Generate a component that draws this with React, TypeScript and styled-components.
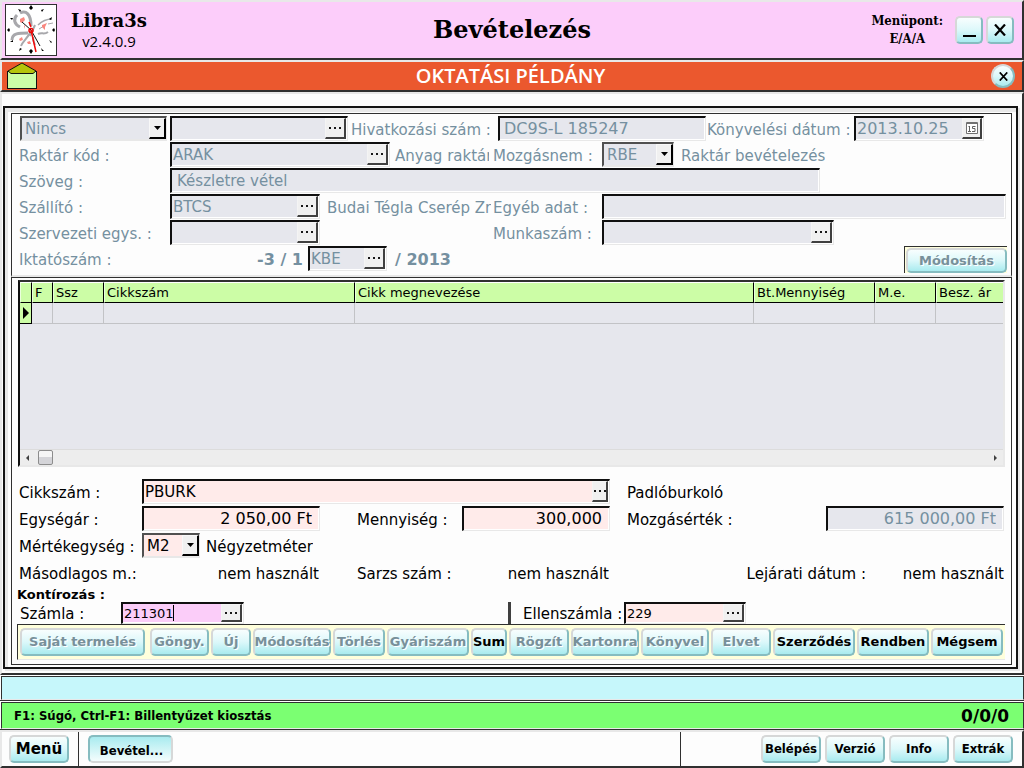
import React from "react";
import styled, { createGlobalStyle, css } from "styled-components";

const ink = "#303030";
const pale = "#e8e8e8";
const muted = "#7590a0";
const sans = '"DejaVu Sans", Verdana, sans-serif';
const narrow = '"DejaVu Sans Condensed", "DejaVu Sans", Tahoma, sans-serif';
const serif = '"DejaVu Serif", Georgia, serif';
const narrowSerif = '"DejaVu Serif Condensed", "DejaVu Serif", Georgia, serif';
const humanist = '"Open Sans", "Trebuchet MS", sans-serif';

const GlobalStyle = createGlobalStyle`
  *, *::before, *::after { box-sizing: border-box; }
  body {
    margin: 0;
    background: #fdfdfd;
    color: #000;
    font-family: ${sans};
    font-size: 15px;
    line-height: 20px;
  }
  button, input, select { font: inherit; color: inherit; margin: 0; }
`;

/* ---------- window frame ---------- */

const Window = styled.div`
  display: flex;
  flex-direction: column;
  min-height: 100vh;
`;

const strip = css`
  border: 2px solid;
  border-color: ${pale} ${ink} ${ink} ${pale};
`;

const Header = styled.header`
  ${strip}
  display: grid;
  grid-template-columns: 1fr auto 1fr;
  align-items: center;
  height: 60px;
  background: #fccdfa;
`;

const Brand = styled.div`
  display: flex;
  align-items: center;
  gap: 14px;
  padding-left: 3px;
`;

const LogoBox = styled.div`
  width: 52px;
  height: 52px;
  background: #fff;
  border: 1px solid ${ink};
  svg { display: block; }
`;

const BrandText = styled.div`
  text-align: center;
`;

const BrandName = styled.div`
  font: bold 18px/22px ${serif};
`;

const Version = styled.div`
  font-family: ${humanist};
  font-size: 15px;
  font-weight: 500;
  line-height: 18px;
`;

const Title = styled.h1`
  margin: 0;
  font: bold 24px/32px ${serif};
`;

const HeaderSide = styled.div`
  display: flex;
  align-items: center;
  justify-content: flex-end;
  gap: 3px;
  padding-right: 8px;
`;

const MenuPoint = styled.div`
  margin-right: 9px;
  text-align: center;
  font: bold 13px/18px ${narrowSerif};
`;

const Banner = styled.div`
  ${strip}
  display: grid;
  grid-template-columns: 1fr auto 1fr;
  align-items: center;
  height: 32px;
  padding: 0 7px 0 4px;
  background: #eb582e;
  color: #fff;
  svg { display: block; }
`;

const BannerText = styled.strong`
  font-family: ${humanist};
  font-weight: 600;
  font-size: 20px;
  line-height: 28px;
`;

/* ---------- buttons ---------- */

const Button = styled.button<{ $w: number; $pressed?: boolean }>`
  flex: none;
  width: ${(p) => p.$w}px;
  height: 28px;
  padding: ${(p) => (p.$pressed ? "4px 0 0 2px" : "0")};
  border: 2px solid;
  border-color: ${(p) =>
    p.$pressed ? "#86bcc0 #d6d8d8 #d6d8d8 #86bcc0" : "#d6d8d8 #86bcc0 #86bcc0 #d6d8d8"};
  border-radius: 5px;
  background: ${(p) =>
    p.$pressed
      ? "linear-gradient(#a9ebef, #f4fdfd)"
      : "linear-gradient(#f8fefe, #dcf8fa 50%, #a9ebef)"};
  font-weight: bold;
  font-size: 13px;
  line-height: 20px;
  white-space: nowrap;
  display: flex;
  align-items: center;
  justify-content: center;
  &:disabled {
    color: #78909a;
    text-shadow: 1px 1px 0 #fff;
  }
`;

const RoundButton = styled(Button)`
  justify-self: end;
  height: 24px;
  border-radius: 50%;
  color: #000;
`;

const MenuButton = styled(Button)`
  font-size: 15px;
`;

const NarrowButton = styled(Button)`
  font-family: ${narrow};
`;

/* ---------- panel ---------- */

const Main = styled.main`
  ${strip}
  flex: 1;
  display: flex;
  padding: 12px 4px 4px 1px;
`;

const Panel = styled.div`
  flex: 1;
  min-width: 0;
  display: flex;
  flex-direction: column;
  padding: 5px 4px 2px 6px;
  border: 2px solid #141414;
  box-shadow: inset 3px 4px 0 ${pale}, 2px 2px 0 ${pale};
`;

const HeadSection = styled.section`
  padding: 2px 4px 3px 7px;
  border: 1px solid ${ink};
  border-bottom: 2px solid ${pale};
  background: #fdfdfd;
  color: ${muted};
`;

const DetailSection = styled.section`
  flex: 1;
  display: flex;
  flex-direction: column;
  padding: 2px 6px 4px 5px;
  border: 1px solid ${ink};
  background: #fdfdfd;
`;

/* ---------- form parts ---------- */

const Row = styled.div<{ $h?: number; $indent?: boolean }>`
  display: flex;
  height: ${(p) => p.$h || 26}px;
  padding-left: ${(p) => (p.$indent ? 1 : 0)}px;
`;

const DetailForm = styled.div`
  padding: 12px 0 0 2px;
`;

const cell = css<{ $w?: number; $pad?: number; $end?: boolean }>`
  flex: none;
  width: ${(p) => (p.$w ? p.$w + "px" : "auto")};
  padding: 4px 0 0 ${(p) => p.$pad || 0}px;
  text-align: ${(p) => (p.$end ? "right" : "left")};
  white-space: nowrap;
  overflow: hidden;
`;

const Label = styled.label<{ $w?: number; $pad?: number; $end?: boolean }>`
  ${cell}
`;

const Text = styled.span<{ $w?: number; $pad?: number; $end?: boolean }>`
  ${cell}
`;

const BoldText = styled(Text)`
  font-weight: bold;
  font-size: 16px;
`;

const Spacer = styled.span`
  flex: 1;
`;

type Tone = "grey" | "rose" | "pink";
const tones: Record<Tone, string> = { grey: "#e6e7ed", rose: "#ffebea", pink: "#fbcdf9" };

const FieldBox = styled.div<{ $w?: number; $tone: Tone; $short?: boolean }>`
  display: flex;
  flex: ${(p) => (p.$w ? "none" : "1")};
  width: ${(p) => (p.$w ? p.$w + "px" : "auto")};
  height: ${(p) => (p.$short ? 22 : 25)}px;
  padding: 0 1px 1px 0;
  border: solid;
  border-width: 2px 1px 1px 2px;
  border-color: #101010 ${pale} ${pale} #101010;
  background: ${(p) => tones[p.$tone]};
  box-shadow: inset -1px -1px 0 #fff;
`;

type InputStyle = { $pad?: number; $end?: boolean; $size: number; $w?: number };

const Input = styled.input<InputStyle>`
  flex: ${(p) => (p.$w ? "none" : "1")};
  width: ${(p) => (p.$w || 0)}px;
  min-width: 0;
  height: 100%;
  padding: 0 ${(p) => (p.$end ? 6 : 0)}px 0 ${(p) => p.$pad || 1}px;
  border: 0;
  outline: 0;
  background: transparent;
  text-align: ${(p) => (p.$end ? "right" : "left")};
  font-size: ${(p) => p.$size}px;
  line-height: 20px;
  &:disabled { color: ${muted}; }
`;

const Caret = styled.span`
  width: 1px;
  margin: 1px auto 1px 0;
  background: #000;
`;

const MiniButton = styled.button<{ $w: number }>`
  flex: none;
  display: flex;
  align-items: center;
  justify-content: center;
  width: ${(p) => p.$w}px;
  height: 100%;
  padding: 0;
  border: solid;
  border-color: #f4f4f4 #404040 #404040 #f4f4f4;
  border-width: 1px 2px 2px 1px;
  background: #f0f0f0;
`;

const SelectBox = styled.div<{ $w: number; $tone: Tone }>`
  flex: none;
  display: grid;
  grid-template-columns: 1fr 17px;
  width: ${(p) => p.$w}px;
  height: 25px;
  border: solid;
  border-width: 2px 1px 2px 2px;
  border-color: #505050 ${pale} ${pale} #505050;
  background: ${(p) => tones[p.$tone]};
  select {
    grid-area: 1 / 1 / 2 / 3;
    width: 100%;
    padding: 0 0 0 3px;
    border: 0;
    outline: 0;
    appearance: none;
    background: transparent;
    opacity: 1;
    line-height: 20px;
  }
`;

const Arrow = styled.span`
  grid-area: 1 / 2 / 2 / 3;
  display: flex;
  align-items: center;
  justify-content: center;
  border: solid;
  border-color: #f8f8f8 #000 #000 #f8f8f8;
  border-width: 1px 2px 2px 1px;
  background: #f0f0f0;
  pointer-events: none;
`;

const ButtonWell = styled.div`
  display: flex;
  align-items: flex-start;
  height: 27px;
  padding: 1px 0 0 1px;
  border-top: 1px solid ${ink};
  border-left: 1px solid ${ink};
  background: #ffffdc;
  ${Button} { height: 25px; }
`;

/* ---------- item grid ---------- */

const GridFrame = styled.div`
  flex: 1;
  display: flex;
  flex-direction: column;
  margin-left: 1px;
  border: 2px solid;
  border-color: ${ink} ${pale} ${pale} #101010;
  background: #e6e7ed;
  overflow: hidden;
`;

const Table = styled.table`
  width: 100%;
  table-layout: fixed;
  border-collapse: separate;
  border-spacing: 0;
  font-size: 13px;
  line-height: 18px;
  th, td {
    height: 21px;
    padding: 0 0 0 2px;
    white-space: nowrap;
    text-align: left;
    font-weight: normal;
  }
  th {
    background: #ccfda6;
    border-right: 1px solid #000;
    border-bottom: 1px solid #000;
    border-top: 1px solid #fff;
    border-left: 1px solid #eaffdc;
  }
  td {
    border-right: 1px solid #c2c3c6;
    border-bottom: 1px solid #c2c3c6;
  }
  th:last-child, td:last-child { border-right: 0; }
  td:first-child {
    padding: 0 0 0 3px;
    background: #ccfda6;
    border-color: #000;
  }
  svg { display: block; }
`;

const ScrollBar = styled.div`
  display: flex;
  align-items: center;
  height: 16px;
  margin-top: auto;
  padding: 0 5px;
  border-top: 1px solid #dcdcdc;
  background: #ededed;
`;

const ScrollThumb = styled.span`
  width: 15px;
  height: 15px;
  margin-left: 8px;
  border: 1px solid #8c8c8c;
  border-radius: 2px;
  background: linear-gradient(#f5f5f5 50%, #d4d4d8 50%);
`;

/* ---------- detail footer ---------- */

const Caption = styled.div`
  height: 15px;
  margin-left: -2px;
  font-weight: bold;
  font-size: 13px;
  line-height: 16px;
`;

const Divider = styled.span`
  width: 3px;
  height: 22px;
  background: #404040;
`;

const AccountText = styled(Label)`
  padding-top: 2px;
`;

const FieldEnd = styled.div`
  display: flex;
  margin-right: 1px;
`;

const ActionBar = styled.div`
  display: flex;
  gap: 2px;
  height: 36px;
  padding: 3px 0 0 2px;
  border-top: 1px solid ${ink};
  border-left: 1px solid ${ink};
  border-bottom: 1px solid ${pale};
  background: #ffffdc;
  ${Button}:first-child { margin-right: 3px; }
`;

/* ---------- status and footer ---------- */

const StatusGroup = styled.div`
  padding: 1px 0 0 1px;
  background: #fff;
  border-bottom: 1px solid ${ink};
`;

const StatusLine = styled.div<{ $color: string; $h: number }>`
  display: flex;
  align-items: center;
  justify-content: space-between;
  height: ${(p) => p.$h}px;
  padding: 0 14px 0 12px;
  border: 1px solid ${ink};
  border-bottom-color: ${pale};
  background: ${(p) => p.$color};
  font: bold 13px/20px ${narrow};
`;

const Counter = styled.span`
  font: bold 17px/20px ${sans};
`;

const Footer = styled.footer`
  ${strip}
  display: flex;
  height: 38px;
`;

const FooterPart = styled.div<{ $w?: number }>`
  display: flex;
  gap: 4px;
  flex: ${(p) => (p.$w ? "none" : "1")};
  width: ${(p) => (p.$w ? p.$w + "px" : "auto")};
  padding: 3px 9px 0;
  border-right: 1px solid ${ink};
  &:first-child { padding-left: 7px; }
  &:last-child {
    justify-content: flex-end;
    border-right: 0;
  }
`;

/* ---------- drawings ---------- */

const Clock = () => (
  <svg width="50" height="50" viewBox="0 0 50 50" aria-hidden="true">
    <g fill="none" stroke="#a8a8ac">
      <path d="M14 8C20 5 25 9 25 21" strokeWidth="3" />
      <path d="M11 10C7 14 8 19 14 22" strokeWidth="3" />
      <path d="M32 20C36 16 41 14 46 14" strokeWidth="1.500" />
      <path d="M32 29C36 27 38 30 42 27" strokeWidth="2" />
      <path d="M6 35C6 28 13 28 22 28" strokeWidth="3" />
      <path d="M25 26C22 33 17 36 15 41" strokeWidth="2" />
      <path d="M24 31L29 20" strokeWidth="2" />
      <path d="M27 32C27 36 28 38 29 40" strokeWidth="2" />
      <path d="M42 19l5-1M33 24l5-3" strokeWidth="1" />
    </g>
    <path
      d="M14 14l4-2 1 3-3 3-2-1zM36 20l5-2-2 4 0 3-3-3zM13 34l3-2 1 3-3 1zM21 37l3-1 1 3-3 0zM18 20l1 1-1 3z"
      fill="#f9877f"
    />
    <g fill="#000">
      <path d="M25 0l2 3-2 2-2-2zM25 44l2 2-2 3-2-3zM1 25l2-2 1 2-1 2zM46 25l2-2 1 2-1 2z" />
      <path d="M12 4l3 1-1 2zM35 5l3-1-2 3zM4 13l3 0-1 2zM43 14l3-2-1 3zM4 37l3-2 0 2zM43 35l3 2-1 1zM13 46l1-3 2 1zM35 43l3 3-2 0z" />
    </g>
    <path d="M25 25L16 17M25 25L34 41" stroke="#111" fill="none" />
    <path d="M25 22L23 17M25 25L30 47" stroke="#f00808" strokeWidth="1.500" />
    <circle cx="25" cy="25.500" r="2" fill="none" stroke="#f00808" strokeWidth="1.500" />
  </svg>
);

const Envelope = () => (
  <svg width="32" height="28" viewBox="0 0 32 28" aria-hidden="true">
    <rect x="1.500" y="9.500" width="29" height="17" fill="#ccfda6" stroke="#111" />
    <path d="M2 9L16 1L30 9L27 11.500H5Z" fill="#b5c40c" stroke="#111" />
  </svg>
);

const Dots = () => (
  <svg width="12" height="2" aria-hidden="true">
    <path d="M0 0h2v2h-2zM5 0h2v2h-2zM10 0h2v2h-2z" fill="#181818" />
  </svg>
);

const Triangle = () => (
  <svg width="7" height="4" aria-hidden="true">
    <path d="M0 0h7L3.500 4z" fill="#000" />
  </svg>
);

const Cross = ({ size }: { size: number }) => (
  <svg width={size} height={size} viewBox="0 0 12 12" aria-hidden="true">
    <path d="M1 .5L11 11.500M11 .5L1 11.500" stroke="#000" strokeWidth="2.200" />
  </svg>
);

const Minimise = () => (
  <svg width="14" height="14" aria-hidden="true">
    <path d="M1 12h13v2H1z" fill="#000" />
  </svg>
);

const CalendarIcon = () => (
  <svg width="12" height="12" aria-hidden="true">
    <path d="M.5 .5h11v11H.5zM0 1.500h12" fill="#fff" stroke="#707070" />
    <path d="M3.500 4v5M2.500 4.500h1M2 9.500h3M9.500 4.500h-3v2h2.500v3h-3" fill="none" stroke="#606060" />
  </svg>
);

/* ---------- composed controls ---------- */

type FieldProps = {
  id: string;
  label?: string;
  value?: string;
  w?: number;
  tone?: Tone;
  pad?: number;
  size?: number;
  end?: boolean;
  short?: boolean;
  disabled?: boolean;
  lookup?: number;
  date?: boolean;
  caret?: boolean;
};

const Field = ({
  id, label, value = "", w, tone = "rose", pad, size = 15, end, short, disabled, lookup, date, caret,
}: FieldProps) => (
  <FieldBox $w={w} $tone={tone} $short={short}>
    <Input
      id={id}
      aria-label={label}
      defaultValue={value}
      disabled={disabled}
      $pad={pad}
      $end={end}
      $size={size}
      $w={caret ? 50 : undefined}
    />
    {caret && <Caret />}
    {lookup && (
      <MiniButton type="button" disabled={disabled} aria-label="Keresés" $w={lookup}>
        <Dots />
      </MiniButton>
    )}
    {date && (
      <MiniButton type="button" disabled={disabled} aria-label="Naptár" $w={20}>
        <CalendarIcon />
      </MiniButton>
    )}
  </FieldBox>
);

type SelectProps = {
  id: string;
  label?: string;
  value: string;
  w: number;
  tone: Tone;
  disabled?: boolean;
};

const Select = ({ id, label, value, w, tone, disabled }: SelectProps) => (
  <SelectBox $w={w} $tone={tone}>
    <select id={id} aria-label={label} disabled={disabled} defaultValue={value}>
      <option>{value}</option>
    </select>
    <Arrow><Triangle /></Arrow>
  </SelectBox>
);

const columns: [string, number | undefined][] = [
  ["", 12], ["F", 21], ["Ssz", 51], ["Cikkszám", 251], ["Cikk megnevezése", undefined],
  ["Bt.Mennyiség", 121], ["M.e.", 61], ["Besz. ár", 67],
];

const actions: [string, number, boolean][] = [
  ["Saját termelés", 125, false], ["Göngy.", 59, false], ["Új", 40, false],
  ["Módosítás", 78, false], ["Törlés", 52, false], ["Gyáriszám", 82, false],
  ["Sum", 36, true], ["Rögzít", 60, false], ["Kartonra", 68, false],
  ["Könyvel", 68, false], ["Elvet", 60, false], ["Szerződés", 82, true],
  ["Rendben", 72, true], ["Mégsem", 72, true],
];

export default function App() {
  return (
    <Window>
      <GlobalStyle />
      <Header>
        <Brand>
          <LogoBox><Clock /></LogoBox>
          <BrandText>
            <BrandName>Libra3s</BrandName>
            <Version>v2.4.0.9</Version>
          </BrandText>
        </Brand>
        <Title>Bevételezés</Title>
        <HeaderSide>
          <MenuPoint>Menüpont:<br />E/A/A</MenuPoint>
          <Button $w={28} type="button" aria-label="Kis méret"><Minimise /></Button>
          <Button $w={28} type="button" aria-label="Bezárás"><Cross size={12} /></Button>
        </HeaderSide>
      </Header>
      <Banner>
        <Envelope />
        <BannerText>OKTATÁSI PÉLDÁNY</BannerText>
        <RoundButton $w={24} type="button" aria-label="Bezárás"><Cross size={9} /></RoundButton>
      </Banner>

      <Main>
        <Panel>
          <HeadSection>
            <Row $indent>
              <Select id="kind" label="Típus" value="Nincs" w={147} tone="grey" disabled />
              <Text $w={3} />
              <Field id="partner" label="Bizonylat" w={178} tone="grey" disabled lookup={21} />
              <Label htmlFor="ref" $w={150} $pad={3}>Hivatkozási szám :</Label>
              <Field id="ref" value="DC9S-L 185247" w={208} tone="grey" pad={4} size={16} disabled />
              <Label htmlFor="bookdate" $w={148} $pad={1}>Könyvelési dátum :</Label>
              <Field id="bookdate" value="2013.10.25" w={130} tone="grey" size={16} disabled date />
            </Row>
            <Row>
              <Label htmlFor="store" $w={151}>Raktár kód :</Label>
              <Field id="store" value="ARAK" w={220} tone="grey" disabled lookup={21} />
              <Text $w={99} $pad={5}>Anyag raktár</Text>
              <Label htmlFor="move" $w={113} $pad={4}>Mozgásnem :</Label>
              <Select id="move" value="RBE" w={72} tone="grey" disabled />
              <Text $pad={7}>Raktár bevételezés</Text>
            </Row>
            <Row>
              <Label htmlFor="note" $w={151}>Szöveg :</Label>
              <Field id="note" value="Készletre vétel" w={650} tone="grey" pad={5} disabled />
            </Row>
            <Row>
              <Label htmlFor="supplier" $w={151}>Szállító :</Label>
              <Field id="supplier" value="BTCS" w={150} tone="grey" disabled lookup={21} />
              <Text $w={171} $pad={7}>Budai Tégla Cserép Zr</Text>
              <Label htmlFor="other" $w={111} $pad={2}>Egyéb adat :</Label>
              <Field id="other" tone="grey" disabled />
              <Text $w={1} />
            </Row>
            <Row>
              <Label htmlFor="org" $w={151}>Szervezeti egys. :</Label>
              <Field id="org" w={150} tone="grey" disabled lookup={21} />
              <Text $w={171} />
              <Label htmlFor="job" $w={111} $pad={2}>Munkaszám :</Label>
              <Field id="job" w={232} tone="grey" disabled lookup={21} />
            </Row>
            <Row>
              <Label htmlFor="fileno" $w={151}>Iktatószám :</Label>
              <BoldText $w={133} $end>-3 / 1</BoldText>
              <Text $w={5} />
              <Field id="fileno" value="KBE" w={79} tone="grey" disabled lookup={21} />
              <BoldText $pad={8}>/ 2013</BoldText>
              <Spacer />
              <ButtonWell>
                <Button $w={101} type="button" disabled>Módosítás</Button>
              </ButtonWell>
            </Row>
          </HeadSection>

          <DetailSection>
            <GridFrame>
              <Table>
                <colgroup>
                  {columns.map(([name, w]) => <col key={name} width={w} />)}
                </colgroup>
                <thead>
                  <tr>{columns.map(([name]) => <th key={name} scope="col">{name}</th>)}</tr>
                </thead>
                <tbody>
                  <tr>
                    {columns.map(([name], i) => (
                      <td key={name}>
                        {i === 0 && (
                          <svg width="6" height="12" aria-hidden="true">
                            <path d="M0 0L6 6L0 12z" fill="#000" />
                          </svg>
                        )}
                      </td>
                    ))}
                  </tr>
                </tbody>
              </Table>
              <ScrollBar>
                <svg width="5" height="6" aria-hidden="true"><path d="M4 0v6L1 3z" fill="#404040" /></svg>
                <ScrollThumb />
                <Spacer />
                <svg width="5" height="6" aria-hidden="true"><path d="M1 0v6L4 3z" fill="#404040" /></svg>
              </ScrollBar>
            </GridFrame>

            <DetailForm>
              <Row $h={27}>
                <Label htmlFor="item" $w={123}>Cikkszám :</Label>
                <Field id="item" value="PBURK" w={468} lookup={16} />
                <Text $pad={17}>Padlóburkoló</Text>
              </Row>
              <Row $h={27}>
                <Label htmlFor="price" $w={123}>Egységár :</Label>
                <Field id="price" value="2 050,00 Ft" w={178} size={16} end />
                <Label htmlFor="qty" $w={142} $pad={37}>Mennyiség :</Label>
                <Field id="qty" value="300,000" w={148} size={16} end />
                <Label htmlFor="total" $pad={17}>Mozgásérték :</Label>
                <Spacer />
                <FieldEnd>
                  <Field id="total" value="615 000,00 Ft" w={178} tone="grey" size={16} end disabled />
                </FieldEnd>
              </Row>
              <Row $h={27}>
                <Label htmlFor="unit" $w={123}>Mértékegység :</Label>
                <Select id="unit" value="M2" w={58} tone="rose" />
                <Text $pad={6}>Négyzetméter</Text>
              </Row>
              <Row $h={27}>
                <Text $w={123}>Másodlagos m.:</Text>
                <Text $w={177} $end>nem használt</Text>
                <Text $w={142} $pad={38}>Sarzs szám :</Text>
                <Text $w={148} $end>nem használt</Text>
                <Spacer />
                <Text>Lejárati dátum :</Text>
                <FieldEnd><Text $w={138} $end>nem használt</Text></FieldEnd>
              </Row>
              <Caption>Kontírozás :</Caption>
              <Row $h={22} $indent>
                <AccountText htmlFor="account" $w={101}>Számla :</AccountText>
                <Field id="account" value="211301" w={123} tone="pink" size={13} short lookup={21} caret />
                <Text $w={264} />
                <Divider />
                <AccountText htmlFor="contra" $w={113} $pad={12}>Ellenszámla :</AccountText>
                <Field id="contra" value="229" w={122} size={13} short lookup={21} />
              </Row>
            </DetailForm>
            <ActionBar>
              {actions.map(([name, w, on]) => (
                <Button key={name} $w={w} type="button" disabled={!on}>{name}</Button>
              ))}
            </ActionBar>
          </DetailSection>
        </Panel>
      </Main>

      <StatusGroup>
        <StatusLine $color="#c6f7fb" $h={24} />
      </StatusGroup>
      <StatusGroup>
        <StatusLine $color="#7bff72" $h={27}>
          <span>F1: Súgó, Ctrl-F1: Billentyűzet kiosztás</span>
          <Counter>0/0/0</Counter>
        </StatusLine>
      </StatusGroup>

      <Footer>
        <FooterPart $w={77}>
          <MenuButton $w={60} type="button">Menü</MenuButton>
        </FooterPart>
        <FooterPart>
          <NarrowButton $w={85} $pressed type="button">Bevétel...</NarrowButton>
        </FooterPart>
        <FooterPart $w={341}>
          {["Belépés", "Verzió", "Info", "Extrák"].map((name) => (
            <NarrowButton key={name} $w={60} type="button">{name}</NarrowButton>
          ))}
        </FooterPart>
      </Footer>
    </Window>
  );
}
